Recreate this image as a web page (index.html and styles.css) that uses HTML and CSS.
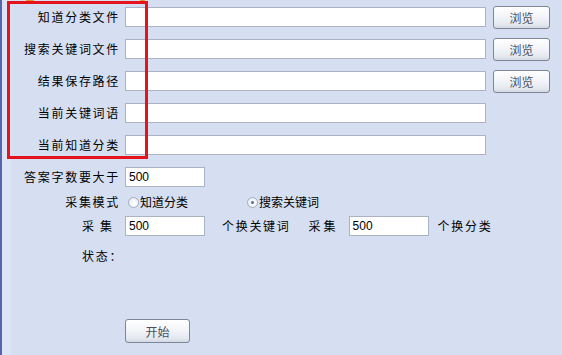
FILE: index.html
```html
<!DOCTYPE html>
<html>
<head>
<meta charset="utf-8">
<link rel="stylesheet" href="styles.css">
</head>
<body>
<div class="win">
  <span class="blob blob-a"></span>
  <span class="blob blob-b"></span>
  <div class="form">
    <div class="row">
      <span class="lbl">知道分类文件</span>
      <div class="txt wide"></div>
      <button class="btn browse">浏览</button>
    </div>
    <div class="row">
      <span class="lbl">搜索关键词文件</span>
      <div class="txt wide"></div>
      <button class="btn browse">浏览</button>
    </div>
    <div class="row">
      <span class="lbl">结果保存路径</span>
      <div class="txt wide"></div>
      <button class="btn browse">浏览</button>
    </div>
    <div class="row">
      <span class="lbl">当前关键词语</span>
      <div class="txt wide"></div>
    </div>
    <div class="row">
      <span class="lbl">当前知道分类</span>
      <div class="txt wide"></div>
    </div>
    <div class="row">
      <span class="lbl">答案字数要大于</span>
      <div class="txt short">500</div>
    </div>
    <div class="row row-radio">
      <span class="lbl">采集模式</span>
      <span class="radio"></span>
      <span class="opt">知道分类</span>
      <span class="radio on"></span>
      <span class="opt">搜索关键词</span>
    </div>
    <div class="row row-collect">
      <span class="lbl lbl-wide">采集</span>
      <div class="txt short">500</div>
      <span class="plain unit1">个换关键词</span>
      <span class="plain collect2">采集</span>
      <div class="txt short">500</div>
      <span class="plain unit2">个换分类</span>
    </div>
    <div class="row row-status">
      <span class="plain">状态：</span>
    </div>
    <div class="row row-start">
      <button class="btn start">开始</button>
    </div>
  </div>
  <div class="mark"></div>
</div>
</body>
</html>
```

FILE: styles.css
```css
html, body {
  margin: 0;
  padding: 0;
}
body {
  width: 562px;
  height: 355px;
  overflow: hidden;
  background: #d6dff2;
  font-family: "Noto Sans CJK SC", "Liberation Sans", sans-serif;
  font-size: 12px;
  color: #000;
}
.win {
  position: relative;
  width: 562px;
  height: 355px;
  box-sizing: border-box;
  border-left: 2px solid #5566ad;
  background: linear-gradient(to right, #dce4f5 0, #dce4f5 8px, #d6dff2 9px);
}
.form {
  display: flex;
  flex-direction: column;
  padding-top: 7px;
}
.row {
  display: flex;
  align-items: center;
  height: 20px;
  margin-bottom: 12px;
}
.lbl {
  width: 118px;
  flex: none;
  text-align: right;
  letter-spacing: 1.7px;
  margin-right: 5px;
  line-height: 20px;
  white-space: nowrap;
}
.lbl-wide {
  letter-spacing: 6px;
  width: 116px;
  padding-right: 2px;
}
.txt {
  box-sizing: border-box;
  height: 20px;
  background: #fff;
  border: 1px solid #aab3c3;
  font-family: "Liberation Sans", Arial, sans-serif;
  font-size: 12px;
  line-height: 18px;
  padding-left: 3px;
  flex: none;
}
.wide {
  width: 361px;
}
.short {
  width: 80px;
}
.btn {
  box-sizing: border-box;
  border: 1px solid #7d8696;
  border-radius: 3px;
  background: linear-gradient(#ffffff 0%, #f3f5f9 45%, #e3e7ee 85%, #d3d8e2 100%);
  font-family: "Noto Sans CJK SC", sans-serif;
  font-size: 12px;
  color: #4a4f5a;
  padding: 0;
  flex: none;
}
.browse {
  width: 57px;
  height: 23px;
  margin-left: 7px;
}
.row-radio {
  margin-top: -7px;
  margin-bottom: 4px;
}
.radio {
  box-sizing: border-box;
  width: 11px;
  height: 11px;
  border-radius: 50%;
  border: 1px solid #a3adbf;
  background: radial-gradient(circle at 60% 60%, #ffffff 0, #eef1f6 60%, #dde2ea 100%);
  margin-left: 3px;
  margin-right: 1px;
  position: relative;
  flex: none;
}
.radio.on::after {
  content: "";
  position: absolute;
  left: 3px;
  top: 3px;
  width: 3px;
  height: 3px;
  border-radius: 50%;
  background: #5a6f9a;
}
.radio.on {
  margin-left: 59px;
}
.opt {
  line-height: 20px;
  white-space: nowrap;
}
.plain {
  letter-spacing: 1.7px;
  white-space: nowrap;
  line-height: 20px;
}
.unit1 {
  margin-left: 17px;
}
.collect2 {
  margin-left: 18px;
  margin-right: 10px;
  letter-spacing: 3px;
}
.unit2 {
  margin-left: 9px;
}
.row-collect {
  margin-bottom: 0;
}
.row-status {
  margin-top: 10px;
  padding-left: 80px;
  margin-bottom: 0;
}
.row-start {
  margin-top: 53px;
  padding-left: 123px;
  height: 24px;
}
.start {
  width: 65px;
  height: 24px;
}
.mark {
  position: absolute;
  left: 5px;
  top: 1px;
  width: 141px;
  height: 158px;
  box-sizing: border-box;
  border: 3px solid #e5141c;
}
.blob {
  position: absolute;
  top: -2px;
  height: 4px;
  border-radius: 50%;
  background: #e8902a;
}
.blob-a {
  left: 24px;
  width: 8px;
}
.blob-b {
  left: 138px;
  width: 5px;
}
```
